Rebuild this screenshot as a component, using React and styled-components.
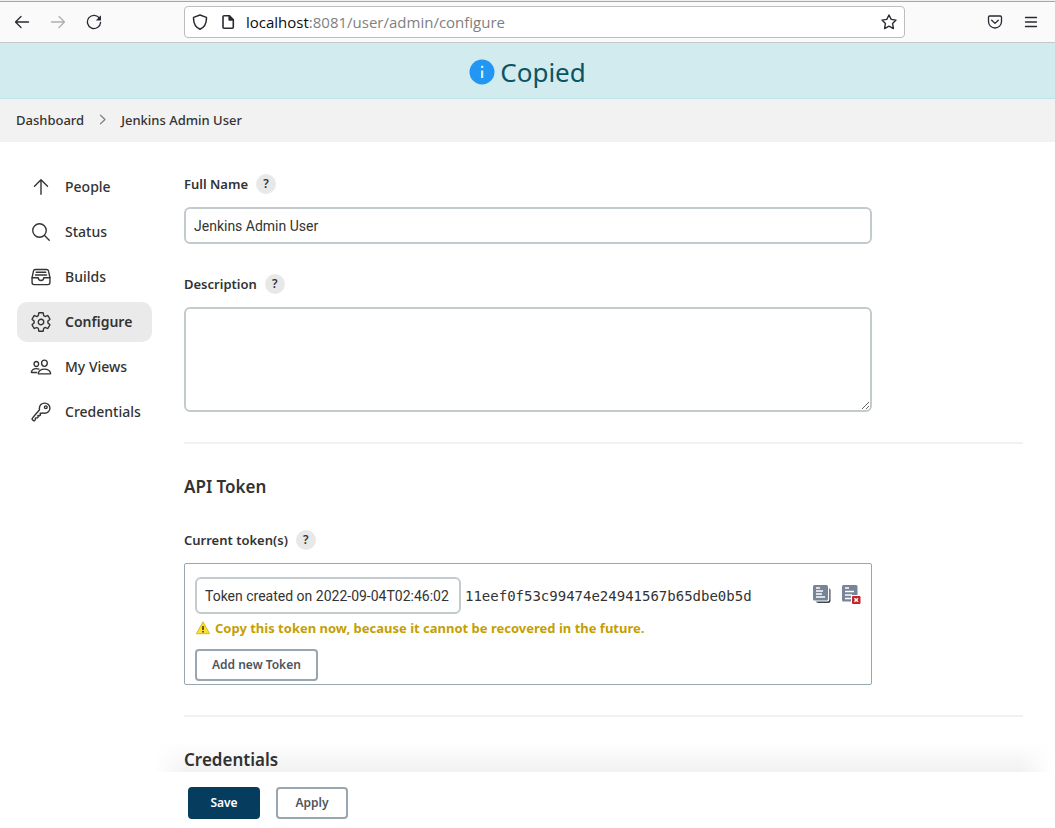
import React from 'react';
import styled, { createGlobalStyle, css } from 'styled-components';
import {
  IoSearchOutline,
  IoFileTrayFullOutline,
  IoSettingsOutline,
  IoPeopleOutline,
  IoKeyOutline,
} from 'react-icons/io5';

const uiFont = '"Noto Sans", "Open Sans", sans-serif';
const fieldFont = 'Roboto, "Noto Sans", sans-serif';

const GlobalStyle = createGlobalStyle`
  *, *::before, *::after { box-sizing: border-box; }
  body {
    margin: 0;
    background: #fff;
    color: #333;
    font-family: ${uiFont};
    font-size: 14px;
    line-height: 20px;
  }
  button, input, textarea { font: inherit; color: inherit; margin: 0; }
  h2, p { margin: 0; }
`;

const Page = styled.div`
  min-height: 100vh;
  display: flex;
  flex-direction: column;
`;

/* Browser toolbar */

const BrowserBar = styled.header`
  display: flex;
  align-items: center;
  height: 43px;
  padding: 0 14px 0 12px;
  background: #fafafa;
  border-top: 1px solid #efefef;
  border-bottom: 1px solid #c6c6c6;
  box-shadow: inset 0 1px #a6a6a6;
`;

const NavGroup = styled.div`
  display: flex;
  gap: 16px;
  width: 172px;
`;

const MenuGroup = styled(NavGroup)`
  width: 136px;
  justify-content: flex-end;
`;

const IconButton = styled.button`
  display: grid;
  place-items: center;
  width: 20px;
  height: 20px;
  padding: 0;
  border: 0;
  background: none;
  color: ${(p) => (p.disabled ? '#b0b0b3' : '#2b2a33')};
`;

const AddressBar = styled.div`
  flex: 1;
  min-width: 0;
  display: flex;
  align-items: center;
  height: 32px;
  padding: 0 5px;
  background: #fff;
  border: 1px solid #bdbdbd;
  border-radius: 4px;
`;

const SiteIcons = styled.div`
  display: flex;
  gap: 8px;
  margin-right: 8px;
`;

const Address = styled.div`
  flex: 1;
  overflow: hidden;
  white-space: nowrap;
  font-family: "Open Sans", "Noto Sans", sans-serif;
  font-size: 15px;
  color: #808080;
`;

const Host = styled.span`
  color: #0c0c0d;
`;

/* Notification and breadcrumbs */

const Notice = styled.div`
  display: flex;
  align-items: center;
  justify-content: center;
  gap: 5px;
  height: 56px;
  padding-top: 2px;
  background: #d2ebef;
  border-bottom: 1px solid #bee5eb;
  color: #0c5464;
  font-size: 26px;
  line-height: 36px;
`;

const Breadcrumbs = styled.nav`
  display: flex;
  align-items: center;
  gap: 13px;
  height: 43px;
  padding: 0 16px 2px;
  background: #f2f2f2;
  font-size: 13px;
  font-weight: 500;
`;

const Crumb = styled.a`
  color: #333;
  text-decoration: none;
`;

/* Body */

const Body = styled.div`
  flex: 1;
  display: flex;
  gap: 32px;
  padding: 25px 32px 0 17px;
`;

const Sidebar = styled.nav`
  flex: none;
  width: 135px;
  display: flex;
  flex-direction: column;
  gap: 5px;
`;

const Task = styled.a`
  display: flex;
  align-items: center;
  gap: 13px;
  height: 40px;
  padding-left: 13px;
  border-radius: 10px;
  color: #333;
  font-weight: 500;
  text-decoration: none;
  white-space: nowrap;
  svg { flex: none; width: 22px; height: 22px; }
  ${(p) => p.$active && css`
    background: #eaeaea;
    font-weight: 600;
  `}
`;

const Content = styled.main`
  flex: 1;
  min-width: 0;
  display: flex;
  flex-direction: column;
  padding-top: 7px;
`;

const Field = styled.div`
  width: 82%;
  margin-bottom: 30px;
`;

const LabelRow = styled.div`
  display: flex;
  align-items: center;
  gap: 8px;
  height: 20px;
  margin-bottom: 13px;
`;

const Label = styled.label`
  font-size: 13px;
  font-weight: 600;
`;

const Help = styled.button`
  width: 20px;
  height: 20px;
  padding: 0;
  border: 0;
  border-radius: 50%;
  background: #e8e8e8;
  font-size: 12px;
  font-weight: 600;
  line-height: 20px;
`;

const fieldBox = css`
  display: block;
  border: 2px solid #c3cbcf;
  border-radius: 6px;
  background: #fff;
  font-family: ${fieldFont};
  font-size: 14px;
  padding: 7px 8px;
`;

const TextInput = styled.input`
  ${fieldBox}
  width: ${(p) => p.$width || '100%'};
  height: 37px;
`;

const TextArea = styled.textarea`
  ${fieldBox}
  width: 100%;
  height: 105px;
  resize: vertical;
`;

const Divider = styled.hr`
  width: 100%;
  height: 2px;
  margin: 0;
  border: 0;
  background: #f1f1f1;
`;

const SectionTitle = styled.h2`
  margin: ${(p) => (p.$last ? '31px 0 0' : '31px 0')};
  font-size: 17px;
  font-weight: 600;
  line-height: 24px;
`;

const TokenPanel = styled.section`
  padding: 13px 10px 3px;
  border: 1px solid #98a6af;
  border-radius: 2px;
`;

const TokenRow = styled.div`
  display: flex;
  align-items: center;
  gap: 4px;
`;

const TokenValue = styled.code`
  flex: 1;
  font-family: "DejaVu Sans Mono", monospace;
  font-size: 14px;
`;

const TokenActions = styled.div`
  display: flex;
  gap: 9px;
  padding-bottom: 4px;
`;

const Warning = styled.p`
  display: flex;
  align-items: center;
  gap: 4px;
  margin: 4px 0 11px;
  color: #c4a000;
  font-size: 13px;
  font-weight: 700;
`;

const Button = styled.button`
  height: 32px;
  padding: 0 15px;
  min-width: 72px;
  border: 2px solid ${(p) => (p.$primary ? '#063d5f' : '#98a6af')};
  border-radius: 4px;
  background: ${(p) => (p.$primary ? '#063d5f' : '#fff')};
  color: ${(p) => (p.$primary ? '#fff' : '#4d545d')};
  font-size: 12px;
  font-weight: 600;
  line-height: 20px;
`;

const Footer = styled.footer`
  position: sticky;
  bottom: 0;
  display: flex;
  gap: 16px;
  height: 57px;
  margin-left: 184px;
  margin-right: 32px;
  padding: 15px 4px;
  background: #fff;

  &::before {
    content: '';
    position: absolute;
    left: -30px;
    right: -30px;
    bottom: 100%;
    height: 30px;
    background: linear-gradient(to top, rgba(0, 0, 0, 0.055), rgba(0, 0, 0, 0));
    mask-image: linear-gradient(to right, transparent, #000 34px, #000 calc(100% - 34px), transparent);
    pointer-events: none;
  }
`;

/* Drawings */

const Stroke = ({ size = 16, width = 1.3, children, ...rest }) => (
  <svg width={size} height={size} viewBox={`0 0 ${size} ${size}`} fill="none" stroke="currentColor"
    strokeWidth={width} strokeLinecap="round" strokeLinejoin="round" aria-hidden="true" {...rest}>
    {children}
  </svg>
);

const BackIcon = () => <Stroke><path d="M14.5 8H1.7M7 2.5 1.5 8 7 13.5" /></Stroke>;
const ForwardIcon = () => <Stroke><path d="M1.5 8h12.8M9 2.5 14.5 8 9 13.5" /></Stroke>;
const ReloadIcon = () => (
  <Stroke>
    <path d="M13.6 4.4A6.6 6.6 0 1 0 14.6 8.4" />
    <path d="M15 1.2v5.2H9.800z" fill="currentColor" stroke="none" />
  </Stroke>
);
const ShieldIcon = () => (
  <Stroke width={1.5}><path d="M8 1 14.4 3.4C14.8 9 12.4 13.200 8 15.300 3.600 13.200 1.200 9 1.600 3.400z" /></Stroke>
);
const PageIcon = () => (
  <Stroke width={1.6}>
    <path d="M4 1.800h5.300l4 4v7.400a1 1 0 0 1-1 1H4a1 1 0 0 1-1-1V2.800a1 1 0 0 1 1-1z" />
    <path d="M9.200 1.800v4.200h4.100z" fill="currentColor" />
  </Stroke>
);
const StarIcon = () => (
  <Stroke width={1.4}>
    <path d="M8 1 10.200 5.400 15 6.100 11.600 9.500 12.400 14.600 8 12.200 3.600 14.600 4.400 9.500 1 6.100 5.800 5.400z" />
  </Stroke>
);
const PocketIcon = () => (
  <Stroke width={1.3}>
    <path d="M2.700 2h10.600a1.200 1.200 0 0 1 1.200 1.200v4.300a6.500 6.500 0 0 1-13 0V3.200A1.200 1.200 0 0 1 2.700 2z" />
    <path d="M4.700 6.200 8 9.400l3.300-3.200" />
  </Stroke>
);
const MenuIcon = () => <Stroke><path d="M2.500 3.500h11M2.500 8h11M2.500 12.500h11" /></Stroke>;

const ChevronIcon = () => (
  <Stroke size={11} width={1.200} stroke="#808080"><path d="M3.500 1.200 8 5.500 3.500 9.800" /></Stroke>
);

const InfoIcon = () => (
  <svg width="26" height="26" viewBox="0 0 26 26" aria-hidden="true">
    <circle cx="13" cy="13" r="12.500" fill="#2196f3" />
    <path d="M12 11.500h2.300V19H12zM12 6.800h2.300v2.300H12z" fill="#d2ebef" />
  </svg>
);

const ArrowUpIcon = () => (
  <svg viewBox="0 0 22 22" fill="none" stroke="currentColor" strokeWidth="1.400" strokeLinecap="round"
    strokeLinejoin="round" aria-hidden="true">
    <path d="M4.500 10.300 11 3.800l6.500 6.500M11 4.300v13.900" />
  </svg>
);

const WarningIcon = () => (
  <svg width="16" height="16" viewBox="0 0 16 16" aria-hidden="true">
    <path d="M8 1.800 14.600 13.700H1.400z" fill="#fce034" stroke="#d9bb18" strokeWidth="1" strokeLinejoin="round" />
    <path d="M7.200 6h1.600v4H7.200zM7.200 11h1.600v1.500H7.200z" fill="#3b3b20" />
  </svg>
);

const SheetLines = () => (
  <path d="M4 4h4M4 7.500h9M4 11h7M4 14.500h9" stroke="#fff" strokeWidth="1.300" />
);

const CopyIcon = () => (
  <svg width="20" height="20" viewBox="0 0 20 20" aria-hidden="true">
    <rect x="4" y="4" width="14.500" height="15" rx="2.500" fill="#40464f" />
    <rect x="2" y="2" width="15.300" height="15.600" rx="2" fill="#fff" />
    <rect x="1" y="1" width="15" height="15.500" rx="1.500" fill="#768697" />
    <path d="M4 4h4M4 7h7M4 10h6M4 13h9" stroke="#fff" strokeWidth="1.400" />
  </svg>
);

const RevokeIcon = () => (
  <svg width="20" height="20" viewBox="0 0 20 20" aria-hidden="true">
    <rect x="1" y="1" width="15.500" height="16.500" rx="1.500" fill="#768697" />
    <SheetLines />
    <rect x="10" y="11" width="10" height="9" fill="#fff" />
    <rect x="11" y="12" width="8.500" height="8" rx="1" fill="#c0262c" />
    <path d="M13.400 14.200l3.600 3.600M17 14.200l-3.600 3.600" stroke="#fff" strokeWidth="1.400" />
  </svg>
);

const tasks = [
  { name: 'People', icon: ArrowUpIcon },
  { name: 'Status', icon: IoSearchOutline },
  { name: 'Builds', icon: IoFileTrayFullOutline },
  { name: 'Configure', icon: IoSettingsOutline, active: true },
  { name: 'My Views', icon: IoPeopleOutline },
  { name: 'Credentials', icon: IoKeyOutline },
];

const FieldLabel = ({ htmlFor, children }) => (
  <LabelRow>
    <Label htmlFor={htmlFor}>{children}</Label>
    <Help type="button" aria-label={`Help for ${children}`}>?</Help>
  </LabelRow>
);

export default function App() {
  return (
    <Page>
      <GlobalStyle />
      <BrowserBar>
        <NavGroup>
          <IconButton aria-label="Back"><BackIcon /></IconButton>
          <IconButton aria-label="Forward" disabled><ForwardIcon /></IconButton>
          <IconButton aria-label="Reload"><ReloadIcon /></IconButton>
        </NavGroup>
        <AddressBar>
          <SiteIcons>
            <IconButton aria-label="Tracking protection"><ShieldIcon /></IconButton>
            <IconButton aria-label="Site information"><PageIcon /></IconButton>
          </SiteIcons>
          <Address><Host>localhost</Host>:8081/user/admin/configure</Address>
          <IconButton aria-label="Bookmark this page"><StarIcon /></IconButton>
        </AddressBar>
        <MenuGroup>
          <IconButton aria-label="Save to Pocket"><PocketIcon /></IconButton>
          <IconButton aria-label="Application menu"><MenuIcon /></IconButton>
        </MenuGroup>
      </BrowserBar>

      <Notice role="status"><InfoIcon />Copied</Notice>

      <Breadcrumbs aria-label="Breadcrumb">
        <Crumb href="#dashboard">Dashboard</Crumb>
        <ChevronIcon />
        <Crumb href="#user">Jenkins Admin User</Crumb>
      </Breadcrumbs>

      <Body>
        <Sidebar aria-label="Tasks">
          {tasks.map(({ name, icon: Icon, active }) => (
            <Task key={name} href="#task" $active={active}><Icon />{name}</Task>
          ))}
        </Sidebar>

        <Content>
          <Field>
            <FieldLabel htmlFor="full-name">Full Name</FieldLabel>
            <TextInput id="full-name" defaultValue="Jenkins Admin User" />
          </Field>
          <Field>
            <FieldLabel htmlFor="description">Description</FieldLabel>
            <TextArea id="description" />
          </Field>

          <Divider />
          <SectionTitle>API Token</SectionTitle>
          <Field>
            <FieldLabel htmlFor="token-name">Current token(s)</FieldLabel>
            <TokenPanel>
              <TokenRow>
                <TextInput id="token-name" $width="266px" defaultValue="Token created on 2022-09-04T02:46:02" />
                <TokenValue>11eef0f53c99474e24941567b65dbe0b5d</TokenValue>
                <TokenActions>
                  <IconButton type="button" aria-label="Copy this token"><CopyIcon /></IconButton>
                  <IconButton type="button" aria-label="Revoke this token"><RevokeIcon /></IconButton>
                </TokenActions>
              </TokenRow>
              <Warning><WarningIcon />Copy this token now, because it cannot be recovered in the future.</Warning>
              <Button type="button">Add new Token</Button>
            </TokenPanel>
          </Field>

          <Divider />
          <SectionTitle $last>Credentials</SectionTitle>
        </Content>
      </Body>

      <Footer>
        <Button type="submit" $primary>Save</Button>
        <Button type="button">Apply</Button>
      </Footer>
    </Page>
  );
}
